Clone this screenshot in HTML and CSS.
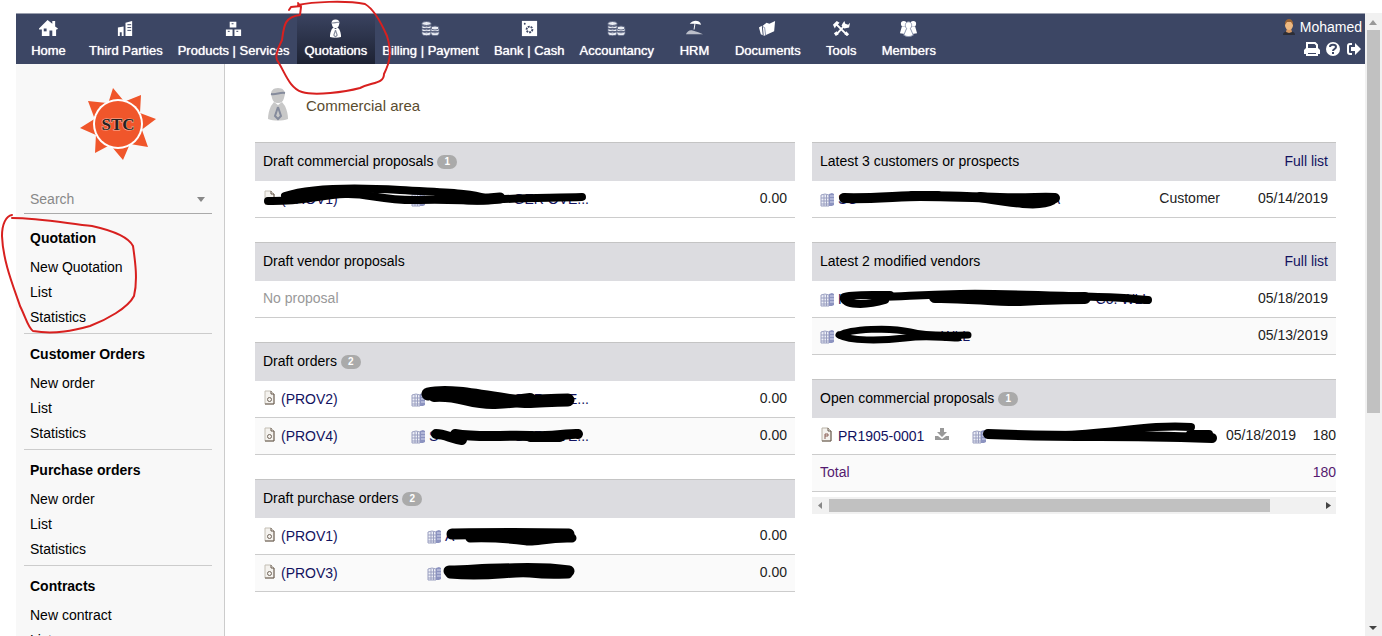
FILE: index.html
```
<!DOCTYPE html>
<html lang="en">

<head>
    <meta charset="utf-8">
    <title>Commercial area</title>
    <link rel="stylesheet" href="styles.css">
</head>

<body>
    <!-- shared icons -->
    <svg class="sprite" aria-hidden="true">
        <symbol id="coins" viewBox="0 0 19 16">
            <g fill="#e9ecf3" stroke="#5b6481" stroke-width="1">
                <path d="M1 11v2c0 3 9 3 9 0v-2zM1 8v2c0 3 9 3 9 0V8zM1 5v2c0 3 9 3 9 0V5zM1 3v1c0 3 9 3 9 0V3z" />
                <ellipse cx="5.500" cy="3" rx="4.500" ry="2" />
                <path d="M10 11v2c0 3 8 3 8 0v-2zM10 8v2c0 3 8 3 8 0V8z" />
                <ellipse cx="14" cy="7.500" rx="4" ry="2" />
            </g>
        </symbol>
        <symbol id="tie" viewBox="0 0 20 34">
            <path d="M10 1c5 0 7 3 7 6l-1 4c-1 4-3 5-6 5s-5-1-6-5L3 7c0-3 2-6 7-6z" />
            <path d="M6 15l4 3 4-3 3 4c2 4 3 9 3 13-6 2-14 2-20 0 0-4 1-9 3-13z" />
            <path class="tie-line" d="M3 7c5 1 9-2 14-1M10 20l-3 9 3 3 3-3-3-9" />
        </symbol>
        <symbol id="doc" viewBox="0 0 11 15">
            <path d="M1 1h6l3 3v10H1z" fill="#f4f2ee" stroke="#c3beb4" />
            <path d="M7 1v3h3v10H1" fill="none" stroke="#66594c" />
            <circle cx="5.500" cy="9.500" r="2" fill="none" stroke="#71665c" />
        </symbol>
        <symbol id="docp" viewBox="0 0 11 15">
            <path d="M1 1h6l3 3v10H1z" fill="#f4f2ee" stroke="#b9b2a6" />
            <path d="M7 1v3h3v10H1" fill="none" stroke="#66594c" />
            <path d="M4 12V7h3v2H4" fill="none" stroke="#8a5f55" />
        </symbol>
        <symbol id="company" viewBox="0 0 15 15">
            <path d="M1 3l4-1 4 1v11H1z" fill="#eef0f8" stroke="#9a9fc0" />
            <path d="M9 2l3-1 2 1v11l-2 1H9z" fill="#8c93c0" />
            <path d="M1 6h8M1 9h8M1 12h8M4 3v11M6.500 3v11" stroke="#9a9fc0" fill="none" />
            <path d="M10 4h4M10 7h4M10 10h4" stroke="#d5d9ee" fill="none" />
        </symbol>
    </svg>

    <div class="page">
        <header class="topbar">
            <nav class="topmenu">
                <a href="#"><svg viewBox="0 0 20 18"><path d="M9 0l5 4V1h3v6l3 2-1 1h-1v7h-4v-6h-3v6H3v-7H0V9z" /><path d="M5 9h3v3H5z" fill="#3c4664" /></svg>Home</a>
                <a href="#"><svg viewBox="0 0 20 18"><path d="M2 8l6-1v10H6v-4H4v4H2zM10 3l7-2v16h-7z" /><path d="M12 5h4M12 8h4M12 11h4" stroke="#3c4664" /></svg>Third Parties</a>
                <a href="#"><svg viewBox="0 0 20 18"><path d="M6 2h7v6H6zM2 10h7v7H2zM11 10h7v7h-7z" /><path d="M8 4h2M4 12h2M13 12h2" stroke="#3c4664" /></svg>Products | Services</a>
                <a href="#" class="active"><svg viewBox="0 0 20 34"><use href="#tie" /></svg>Quotations</a>
                <a href="#"><svg viewBox="0 0 19 16"><use href="#coins" /></svg>Billing | Payment</a>
                <a href="#"><svg viewBox="0 0 20 18"><path d="M2 1h16v16H2z" /><circle cx="10" cy="10" r="3" fill="none" stroke="#3c4664" stroke-width="2" stroke-dasharray="2 1" /><circle cx="5" cy="4" r="1" fill="#3c4664" /></svg>Bank | Cash</a>
                <a href="#"><svg viewBox="0 0 19 16"><use href="#coins" /></svg>Accountancy</a>
                <a href="#"><svg viewBox="0 0 20 18"><path d="M5 4c3-4 9-4 11-1l1 2-6-1-1 6H9l1-6z" /><path d="M1 15c1-3 4-5 7-4l6 2 5 2z" opacity=".65" /></svg>HRM</a>
                <a href="#"><svg viewBox="0 0 20 18"><path d="M1 8l3-2 1 10-2-1zM5 6l4-3 3 1 6-3-1 11-11 5z" /><path d="M5 7l2 1 1 8" fill="none" stroke="#8790aa" /></svg>Documents</a>
                <a href="#"><svg viewBox="0 0 20 18"><path d="M4 4l12 12M5 15l9-10" fill="none" stroke="#fff" stroke-width="2" /><path d="M1 5l4-4 3 2-4 4-1 2zM11 4l2-3 1 3 3 1 2-2-1 5-5 1-3-3zM2 14l3-2 2 3-3 2zM13 15l2-3 3 3-2 2z" /></svg>Tools</a>
                <a href="#"><svg viewBox="0 0 20 18"><circle cx="5" cy="4" r="3" /><circle cx="15" cy="4" r="3" /><path d="M1 14l2-7h5v8zM12 7h5l2 7-7 1z" /><path d="M10 2c4 0 4 5 2 7l3 7c-3 2-7 2-10 0l3-7c-2-2-2-7 2-7z" stroke="#8790aa" /></svg>Members</a>
            </nav>
            <div class="user">
                <a href="#"><svg width="16" height="16" viewBox="0 0 16 16"><path d="M2 16c0-3 3-4 6-4s6 1 6 4z" fill="#2b2d36" /><path d="M6 9h4l1 4-3 1-3-1z" fill="#d89a63" /><ellipse cx="8" cy="6" rx="4" ry="5" fill="#eeb981" /><path d="M4 6c-1-8 9-8 8 0l-2-3H6z" fill="#9a6333" /></svg>Mohamed</a>
                <div class="tools">
                    <button aria-label="Print"><svg width="16" height="16" viewBox="0 0 16 16"><path d="M3 8V2h8l2 2v4" fill="none" stroke="#fff" stroke-width="2" /><path d="M2 7h12l2 2v4H0V9z" fill="#fff" /><path d="M3 11h10v3H3z" fill="#3c4664" stroke="#fff" stroke-width="2" /></svg></button>
                    <button aria-label="Help"><svg width="16" height="16" viewBox="0 0 16 16"><circle cx="8" cy="8" r="7" fill="#fff" /><path d="M5 6c0-3 6-3 6 0 0 2-3 2-3 4M8 11v2" fill="none" stroke="#3c4664" stroke-width="2" /></svg></button>
                    <button aria-label="Log out"><svg width="16" height="16" viewBox="0 0 16 16"><path d="M6 3H4C2 3 2 4 2 5v6c0 1 0 2 2 2h2" fill="none" stroke="#fff" stroke-width="2" /><path d="M5 6h4V2l6 6-6 6v-4H5z" fill="#fff" /></svg></button>
                </div>
            </div>
        </header>

        <div class="body">
            <aside class="sidebar">
                <svg class="logo" viewBox="0 0 76 72" role="img" aria-label="STC">
                    <g fill="#f0562b">
                        <path d="M33 0l10 12-15 4zM61 7l-1 18-14-12zM76 31L60 43V25zM68 59l-18-3 12-14zM43 72l-11-13 17-1zM15 65l1-19 14 11zM0 40l16-10v17zM8 13l19 2-13 14z" />
                        <circle cx="38" cy="36" r="25" fill="#fff" />
                        <circle cx="38" cy="36" r="23" />
                    </g>
                    <text x="38" y="42" text-anchor="middle">STC</text>
                </svg>
                <label class="search">
                    <select aria-label="Search">
                        <option>Search</option>
                    </select>
                    <svg width="8" height="5" viewBox="0 0 8 5"><path d="M0 0h8L4 5z" fill="#888" /></svg>
                </label>
                <ul class="group">
                    <li class="title"><a href="#">Quotation</a></li>
                    <li><a href="#">New Quotation</a></li>
                    <li><a href="#">List</a></li>
                    <li><a href="#">Statistics</a></li>
                </ul>
                <ul class="group">
                    <li class="title"><a href="#">Customer Orders</a></li>
                    <li><a href="#">New order</a></li>
                    <li><a href="#">List</a></li>
                    <li><a href="#">Statistics</a></li>
                </ul>
                <ul class="group">
                    <li class="title"><a href="#">Purchase orders</a></li>
                    <li><a href="#">New order</a></li>
                    <li><a href="#">List</a></li>
                    <li><a href="#">Statistics</a></li>
                </ul>
                <ul class="group">
                    <li class="title"><a href="#">Contracts</a></li>
                    <li><a href="#">New contract</a></li>
                    <li><a href="#">List</a></li>
                </ul>
            </aside>

            <main class="content">
                <h1><svg width="20" height="34"><use href="#tie" /></svg>Commercial area</h1>
                <div class="columns">
                    <div class="column">
                        <table>
                            <tr><th colspan="3">Draft commercial proposals <span class="badge">1</span></th></tr>
                            <tr>
                                <td class="ref"><a href="#"><svg class="doc"><use href="#doc" /></svg>(PROV1)</a></td>
                                <td><a href="#"><svg class="company"><use href="#company" /></svg><span class="name">GER OVE...</span></a></td>
                                <td class="amount">0.00</td>
                            </tr>
                        </table>
                        <table>
                            <tr><th>Draft vendor proposals</th></tr>
                            <tr><td class="empty">No proposal</td></tr>
                        </table>
                        <table>
                            <tr><th colspan="3">Draft orders <span class="badge">2</span></th></tr>
                            <tr>
                                <td class="ref"><a href="#"><svg class="doc"><use href="#doc" /></svg>(PROV2)</a></td>
                                <td><a href="#"><svg class="company"><use href="#company" /></svg><span class="name">GER OVE...</span></a></td>
                                <td class="amount">0.00</td>
                            </tr>
                            <tr>
                                <td class="ref"><a href="#"><svg class="doc"><use href="#doc" /></svg>(PROV4)</a></td>
                                <td><a href="#"><svg class="company"><use href="#company" /></svg><span class="name"><span>S</span>GER OVE...</span></a></td>
                                <td class="amount">0.00</td>
                            </tr>
                        </table>
                        <table>
                            <tr><th colspan="3">Draft purchase orders <span class="badge">2</span></th></tr>
                            <tr>
                                <td class="ref wide"><a href="#"><svg class="doc"><use href="#doc" /></svg>(PROV1)</a></td>
                                <td><a href="#"><svg class="company"><use href="#company" /></svg>A</a></td>
                                <td class="amount">0.00</td>
                            </tr>
                            <tr>
                                <td class="ref wide"><a href="#"><svg class="doc"><use href="#doc" /></svg>(PROV3)</a></td>
                                <td><a href="#"><svg class="company"><use href="#company" /></svg></a></td>
                                <td class="amount">0.00</td>
                            </tr>
                        </table>
                    </div>

                    <div class="column">
                        <table>
                            <tr>
                                <th colspan="2">Latest 3 customers or prospects</th>
                                <th class="date"><a href="#">Full list</a></th>
                            </tr>
                            <tr>
                                <td><a href="#"><svg class="company"><use href="#company" /></svg><span class="name long"><span>SC</span>S.A</span></a></td>
                                <td class="type">Customer</td>
                                <td class="date">05/14/2019</td>
                            </tr>
                        </table>
                        <table>
                            <tr>
                                <th>Latest 2 modified vendors</th>
                                <th class="date"><a href="#">Full list</a></th>
                            </tr>
                            <tr>
                                <td><a href="#"><svg class="company"><use href="#company" /></svg><span class="name longest"><span>K</span>Co. WLL</span></a></td>
                                <td class="date">05/18/2019</td>
                            </tr>
                            <tr>
                                <td><a href="#"><svg class="company"><use href="#company" /></svg><span class="name short">WLL</span></a></td>
                                <td class="date">05/13/2019</td>
                            </tr>
                        </table>
                        <div class="scroller">
                            <table>
                                <tr><th colspan="4">Open commercial proposals <span class="badge">1</span></th></tr>
                                <tr>
                                    <td class="ref mid"><a href="#"><svg class="doc"><use href="#docp" /></svg>PR1905-0001</a><a href="#" aria-label="Download"><svg class="download" viewBox="0 0 14 14"><path d="M5 1h4v4h3L7 10 2 5h3zM0 9h3l4 3 4-3h3v4H0z" fill="#999" /></svg></a></td>
                                    <td><a href="#"><svg class="company"><use href="#company" /></svg></a></td>
                                    <td class="date">05/18/2019</td>
                                    <td class="cut">180</td>
                                </tr>
                                <tr class="total">
                                    <td colspan="3">Total</td>
                                    <td class="cut">180</td>
                                </tr>
                            </table>
                            <div class="hbar">
                                <svg width="17" height="17"><path d="M10 5v7L6 8.500z" fill="#888" /></svg>
                                <div class="track"><div class="thumb"></div></div>
                                <svg width="17" height="17"><path d="M7 5v7l5-3.500z" fill="#444" /></svg>
                            </div>
                        </div>
                    </div>
                </div>
            </main>
        </div>
    </div>

    <div class="vbar">
        <svg width="17" height="17"><path d="M4 12h8L8 7z" fill="#999" /></svg>
        <div class="track"><div class="thumb"></div></div>
        <svg width="17" height="17"><path d="M4 7h8l-4 4z" fill="#444" /></svg>
    </div>

    <!-- pen marks over the page -->
    <svg class="marks" width="1382" height="636" viewBox="0 0 1382 636" aria-hidden="true">
        <g class="black">
            <path stroke-width="8" d="M285 196C310 188 350 187 400 190S470 193 485 198" />
            <path stroke-width="8" d="M268 201C300 202 320 195 345 194S380 201 420 200S470 202 490 200S550 198 582 197" />
            <path stroke-width="11" d="M440 195C460 200 480 200 500 198" />
            <path stroke-width="13" d="M428 394C445 390 470 394 500 399S540 400 568 400" />
            <path stroke-width="12" d="M434 396C460 394 470 404 495 403S510 401 530 399" />
            <path stroke-width="10" d="M436 434C445 434 450 438 462 440" />
            <path stroke-width="10" d="M455 434C480 438 500 435 530 436S570 433 578 434" />
            <path stroke-width="10" d="M530 437H560" />
            <path stroke-width="11" d="M452 534C470 534 500 533 569 534" />
            <path stroke-width="9" d="M470 538C500 537 520 540 528 541S550 537 572 538" />
            <path stroke-width="11" d="M449 571C470 571 480 569 500 569S540 567 569 571" />
            <path stroke-width="9" d="M450 574C490 578 510 571 530 573S555 574 568 574" />
            <path stroke-width="10" d="M844 198C870 199 900 196 920 196S970 197 1000 198S1040 197 1055 198" />
            <path stroke-width="8" d="M912 195H938" />
            <path stroke-width="10" d="M980 197C1010 202 1040 207 1052 200" />
            <path stroke-width="8" d="M890 295C870 295 850 294 844 297C842 305 865 306 885 300" />
            <path stroke-width="8" d="M880 297C910 296 920 295 960 294S1060 296 1098 297S1130 299 1148 300" />
            <path stroke-width="12" d="M935 297C960 296 1000 301 1020 300S1070 298 1085 298" />
            <path stroke-width="7" d="M840 335C850 329 890 327 910 332S950 335 968 335" />
            <path stroke-width="7" d="M839 335C850 341 880 341 905 338S940 338 958 338" />
            <path stroke-width="10" d="M988 434C1030 436 1060 436 1100 436S1180 437 1212 438" />
            <path stroke-width="8" d="M1060 435C1110 434 1150 424 1191 427M1190 434H1209" />
        </g>
        <g class="red">
            <path d="M289 10l2-3 10-1M298 3l3 4-1 8C284 17 284 26 282 40C277 50 275 56 277 60C285 72 289 88 302 92C315 96 345 92 360 88C372 82 384 84 384 74C390 62 392 52 387 36C380 20 372 8 365 4C345 0 312 2 298 5" />
            <path d="M12 215C6 216 2 224 2 236C3 262 14 288 20 306C26 318 28 328 33 331C55 335 75 330 90 326C106 320 128 308 134 296C138 280 135 260 133 246C128 236 110 230 92 226C70 224 40 218 12 218" />
        </g>
    </svg>
</body>

</html>
```

FILE: styles.css
```
*{
    box-sizing: border-box;
}

body{
    display: flex;
    height: 100vh;
    margin: 0;
    padding: 13px 0 0 16px;
    overflow: hidden;
    background: #fff;
    color: #222;
    font-family: "Liberation Sans", Arial, sans-serif;
    font-size: 14px;
    line-height: 20px;
}

a{
    color: #12125f;
    text-decoration: none;
}

.sprite{
    position: absolute;
    width: 0;
    height: 0;
}

.page{
    display: flex;
    flex-direction: column;
    flex: 1;
    min-width: 0;
}

/* top menu */
.topbar{
    display: flex;
    justify-content: space-between;
    flex: none;
    height: 51px;
    background: #3c4664;
    border-top: 1px solid #9a9fae;
}

.topmenu{
    display: flex;
}

.topmenu a{
    display: flex;
    flex-direction: column;
    align-items: center;
    min-width: 66px;
    padding: 5px 8px 0 7px;
    color: #fff;
    font-size: 13px;
    line-height: 26px;
    text-shadow: 0 0 1px #fff;
    white-space: nowrap;
}

.topmenu svg{
    width: 19px;
    height: 19px;
    fill: #fff;
}

.topmenu .active{
    background: linear-gradient(#3a4360, #1d2233);
}

.tie-line{
    fill: none;
    stroke: #858b9c;
    stroke-width: 2;
}

.user{
    display: flex;
    flex-direction: column;
    align-items: flex-end;
    padding: 3px 3px 0 0;
}

.user a{
    display: flex;
    align-items: center;
    gap: 3px;
    color: #fff;
}

.tools{
    display: flex;
    gap: 5px;
    padding-top: 4px;
}

.tools button{
    display: flex;
    padding: 0;
    border: 0;
    background: none;
}

.body{
    display: flex;
    flex: 1;
    min-height: 0;
}

/* left menu */
.sidebar{
    flex: none;
    width: 209px;
    padding: 24px 12px 0 8px;
    overflow: hidden;
    background: #f8f8f8;
    border-right: 1px solid #ccc;
}

.logo{
    display: block;
    width: 76px;
    height: 72px;
    margin: 0 auto 25px 56px;
}

.logo text{
    fill: #222;
    stroke: #f7b8a4;
    stroke-width: 1px;
    paint-order: stroke;
    font: bold 17px "Liberation Serif", serif;
}

.search{
    display: flex;
    align-items: center;
    height: 29px;
    margin-bottom: 3px;
    padding: 0 7px 0 6px;
    border-bottom: 1px solid #aaa;
}

.search select{
    flex: 1;
    padding: 0;
    border: 0;
    background: none;
    appearance: none;
    color: #888;
    font: inherit;
}

.group{
    margin: 0;
    padding: 8px 6px 3px;
    border-top: 1px solid #ccc;
    list-style: none;
    line-height: 25px;
}

.search + .group{
    border-color: transparent;
}

.group a{
    color: #000;
}

.group .title{
    margin-bottom: 4px;
    font-weight: bold;
}

/* main area */
.content{
    flex: 1;
    min-width: 0;
    padding: 22px 29px 0 30px;
}

h1{
    display: flex;
    align-items: center;
    gap: 18px;
    height: 40px;
    margin: 0 0 16px;
    padding-left: 13px;
    color: #5a4c30;
    font-size: 15px;
    font-weight: normal;
}

h1 svg{
    margin-bottom: 4px;
    fill: #c8c8c8;
}

.columns{
    display: grid;
    grid-template-columns: minmax(0, 540fr) minmax(0, 524fr);
    gap: 17px;
}

.column{
    display: flex;
    flex-direction: column;
    gap: 24px;
}

table{
    width: 100%;
    border-spacing: 0;
}

th{
    height: 39px;
    padding: 0 8px 2px;
    background: #dcdce0;
    border-top: 1px solid #c4c4c4;
    color: #000;
    font-weight: normal;
    text-align: left;
}

td{
    height: 37px;
    padding: 0 8px 2px;
    border-bottom: 1px solid #ccc;
    white-space: nowrap;
}

tr:nth-child(3) td{
    background: #fafafa;
}

td a{
    display: inline-flex;
    align-items: center;
    height: 22px;
    padding-top: 2px;
    vertical-align: bottom;
}

.badge{
    display: inline-block;
    width: 20px;
    border-radius: 7px;
    background: #aaa;
    color: #fff;
    font-size: 10px;
    font-weight: bold;
    line-height: 14px;
    text-align: center;
    vertical-align: 1px;
}

.ref{
    width: 148px;
}

.ref.mid{
    width: 152px;
}

.ref.wide{
    width: 164px;
}

.doc{
    width: 11px;
    height: 15px;
    margin: 0 6px 4px 1px;
}

.company{
    width: 15px;
    height: 15px;
    margin-right: 3px;
}

.download{
    width: 14px;
    height: 14px;
    margin: 0 0 4px 11px;
}

.name{
    display: flex;
    justify-content: flex-end;
    width: 160px;
}

.name span{
    margin-right: auto;
}

.name.short{
    width: 132px;
}

.name.long{
    width: 222px;
}

.name.longest{
    width: 312px;
}

.empty{
    color: #999;
}

.amount, .date, .type{
    text-align: right;
}

.date{
    width: 108px;
}

.scroller .date{
    width: 86px;
}

.cut{
    width: 32px;
    padding: 0 0 2px;
    text-align: right;
}

.total td{
    color: #551a70;
}

/* scrollbars */
.hbar{
    display: flex;
    margin-top: 5px;
    background: #f1f1f1;
}

.track{
    flex: 1;
}

.hbar .thumb{
    width: 90%;
    height: 13px;
    margin-top: 2px;
    background: #c1c1c1;
}

.vbar{
    display: flex;
    flex-direction: column;
    flex: none;
    width: 17px;
    background: #f1f1f1;
}

.vbar .thumb{
    width: 13px;
    height: 65%;
    margin-left: 2px;
    background: #c1c1c1;
}

.marks{
    position: absolute;
    top: 0;
    left: 0;
    pointer-events: none;
}

.black path{
    fill: none;
    stroke: #000;
    stroke-linecap: round;
    stroke-linejoin: round;
}

.red path{
    fill: none;
    stroke: #d8201f;
    stroke-width: 2;
    stroke-linecap: round;
    stroke-linejoin: round;
}
```
